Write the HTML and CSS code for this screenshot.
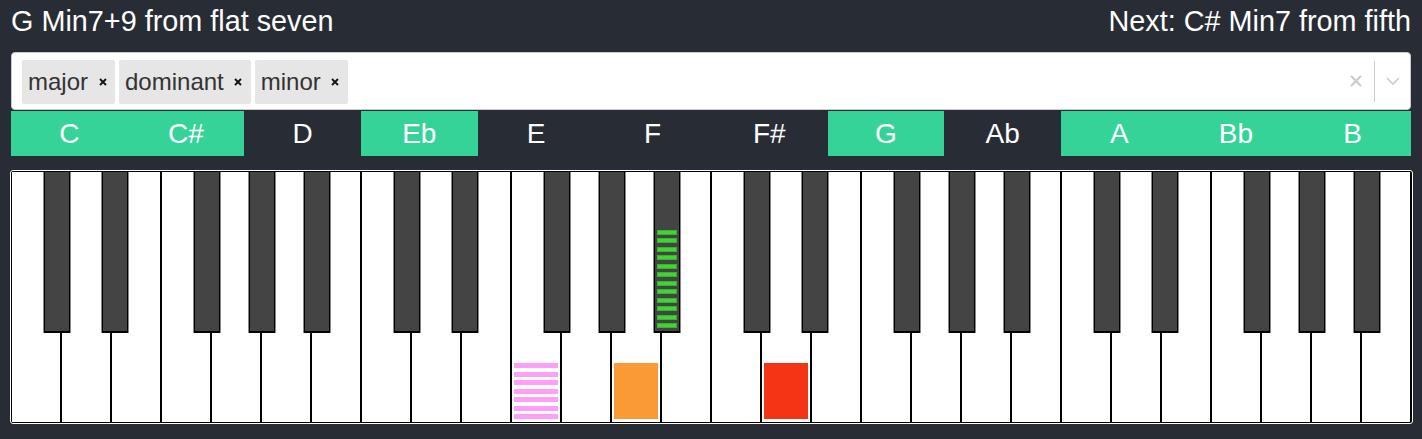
FILE: index.html
```html
<!DOCTYPE html>
<html>
<head>
<meta charset="utf-8">
<link rel="stylesheet" href="styles.css">
</head>
<body>
<div class="app">
  <div class="header">
    <div>G Min7+9 from flat seven</div>
    <div>Next: C# Min7 from fifth</div>
  </div>
  <div class="select">
    <div class="values">
      <div class="tag"><span class="tag-label">major</span><span class="tag-remove"><svg width="8" height="8" viewBox="0 0 8 8"><path d="M1 1L7 7M7 1L1 7" stroke="#111" stroke-width="1.8"/></svg></span></div>
      <div class="tag"><span class="tag-label">dominant</span><span class="tag-remove"><svg width="8" height="8" viewBox="0 0 8 8"><path d="M1 1L7 7M7 1L1 7" stroke="#111" stroke-width="1.8"/></svg></span></div>
      <div class="tag"><span class="tag-label">minor</span><span class="tag-remove"><svg width="8" height="8" viewBox="0 0 8 8"><path d="M1 1L7 7M7 1L1 7" stroke="#111" stroke-width="1.8"/></svg></span></div>
    </div>
    <div class="indicators">
      <div class="clear"><svg width="12" height="12" viewBox="0 0 12 12"><path d="M1 1L11 11M11 1L1 11" stroke="#ccc" stroke-width="2.2"/></svg></div>
      <div class="sep"></div>
      <div class="chev"><svg width="14" height="8" viewBox="0 0 14 8"><path d="M1 1L7 7L13 1" fill="none" stroke="#ccc" stroke-width="1.6"/></svg></div>
    </div>
  </div>
  <div class="notes">
    <div class="note on">C</div>
    <div class="note on">C#</div>
    <div class="note">D</div>
    <div class="note on">Eb</div>
    <div class="note">E</div>
    <div class="note">F</div>
    <div class="note">F#</div>
    <div class="note on">G</div>
    <div class="note">Ab</div>
    <div class="note on">A</div>
    <div class="note on">Bb</div>
    <div class="note on">B</div>
  </div>
  <div class="piano">
    <div class="octave">
      <div class="wk"></div><div class="wk"></div><div class="wk"></div><div class="wk"></div><div class="wk"></div><div class="wk"></div><div class="wk"></div>
      <div class="bk cs"></div><div class="bk ds"></div><div class="bk fs"></div><div class="bk gs"></div><div class="bk as"></div>
    </div>
    <div class="octave">
      <div class="wk"></div><div class="wk"></div><div class="wk"></div>
      <div class="wk"><div class="mark pink"><i></i><i></i><i></i><i></i><i></i><i></i><i></i></div></div>
      <div class="wk"></div>
      <div class="wk"><div class="mark orange"></div></div>
      <div class="wk"></div>
      <div class="bk cs"></div><div class="bk ds"></div><div class="bk fs"></div><div class="bk gs"></div>
      <div class="bk as"><div class="gmark"><i></i><i></i><i></i><i></i><i></i><i></i><i></i><i></i><i></i><i></i><i></i><i></i></div></div>
    </div>
    <div class="octave">
      <div class="wk"></div>
      <div class="wk"><div class="mark red"></div></div>
      <div class="wk"></div><div class="wk"></div><div class="wk"></div><div class="wk"></div><div class="wk"></div>
      <div class="bk cs"></div><div class="bk ds"></div><div class="bk fs"></div><div class="bk gs"></div><div class="bk as"></div>
    </div>
    <div class="octave">
      <div class="wk"></div><div class="wk"></div><div class="wk"></div><div class="wk"></div><div class="wk"></div><div class="wk"></div><div class="wk"></div>
      <div class="bk cs"></div><div class="bk ds"></div><div class="bk fs"></div><div class="bk gs"></div><div class="bk as"></div>
    </div>
  </div>
</div>
</body>
</html>
```
FILE: styles.css
```css
* { box-sizing: border-box; }
html, body { margin: 0; padding: 0; }
body {
  background: #282c34;
  font-family: "Liberation Sans", Arial, sans-serif;
  width: 1422px;
  height: 439px;
  overflow: hidden;
}
.app { padding: 0 11px; }
.header {
  display: flex;
  justify-content: space-between;
  height: 52px;
  padding-top: 5px;
  font-size: 28.8px;
  color: #fff;
  line-height: normal;
}
.select {
  height: 58px;
  background: #fff;
  border: 1px solid #ccc;
  border-radius: 4px;
  display: flex;
  align-items: center;
}
.values {
  flex: 1;
  display: flex;
  gap: 4px;
  padding-left: 10px;
  padding-top: 1px;
}
.tag {
  height: 44px;
  background: #e6e6e6;
  border-radius: 2px;
  display: flex;
  align-items: center;
  font-size: 24px;
  color: #333;
}
.tag-label { padding: 0 3px 0 6px; }
.tag-remove {
  width: 24px;
  display: flex;
  justify-content: center;
  align-items: center;
  padding-right: 1px;
}
.indicators {
  display: flex;
  align-items: center;
  height: 100%;
}
.clear {
  width: 36px;
  display: flex;
  justify-content: center;
}
.sep {
  width: 1px;
  height: 41px;
  background: #ccc;
}
.chev {
  width: 35px;
  display: flex;
  justify-content: center;
}
.notes {
  margin-top: 1px;
  display: grid;
  grid-template-columns: repeat(12, 1fr);
  height: 45px;
}
.note {
  color: #fff;
  font-size: 28px;
  line-height: 45px;
  text-align: center;
}
.note.on { background: #36d399; }
.piano {
  margin-top: 14px;
  margin-left: -1px;
  width: 1403px;
  border: 1px solid #fff;
  border-radius: 3px;
  background: #000;
  padding: 1px 2px 1px 1px;
  display: flex;
  gap: 2px;
}
.octave {
  position: relative;
  display: flex;
  gap: 2px;
}
.wk {
  width: 48px;
  height: 250px;
  background: #fff;
  display: flex;
  flex-direction: column;
  justify-content: flex-end;
  padding: 0 2px 3px;
}
.mark { height: 56px; }
.mark.orange { background: #f99a36; }
.mark.red { background: #f53415; }
.mark.pink {
  display: flex;
  flex-direction: column;
  justify-content: space-between;
}
.mark.pink i {
  display: block;
  height: 5px;
  background: #ff9ff5;
}
.bk {
  position: absolute;
  top: 0;
  width: 26px;
  height: 161px;
  background: #444;
  border: 1px solid #000;
  border-top: 0;
  border-bottom-width: 2px;
  box-shadow: -1px 0 0 #8a8a8a, 1px 0 0 #8a8a8a;
  display: flex;
  flex-direction: column;
  justify-content: flex-end;
  padding: 0 2px 3px;
}
.bk.cs { left: 32px; }
.bk.ds { left: 90px; }
.bk.fs { left: 182px; }
.bk.gs { left: 237px; }
.bk.as { left: 292px; }
.gmark {
  height: 98px;
  display: flex;
  flex-direction: column;
  justify-content: space-between;
}
.gmark i {
  display: block;
  height: 5px;
  background: #3fd634;
  box-shadow: inset 0 0 0 1px rgba(40, 120, 30, 0.35);
}
```
